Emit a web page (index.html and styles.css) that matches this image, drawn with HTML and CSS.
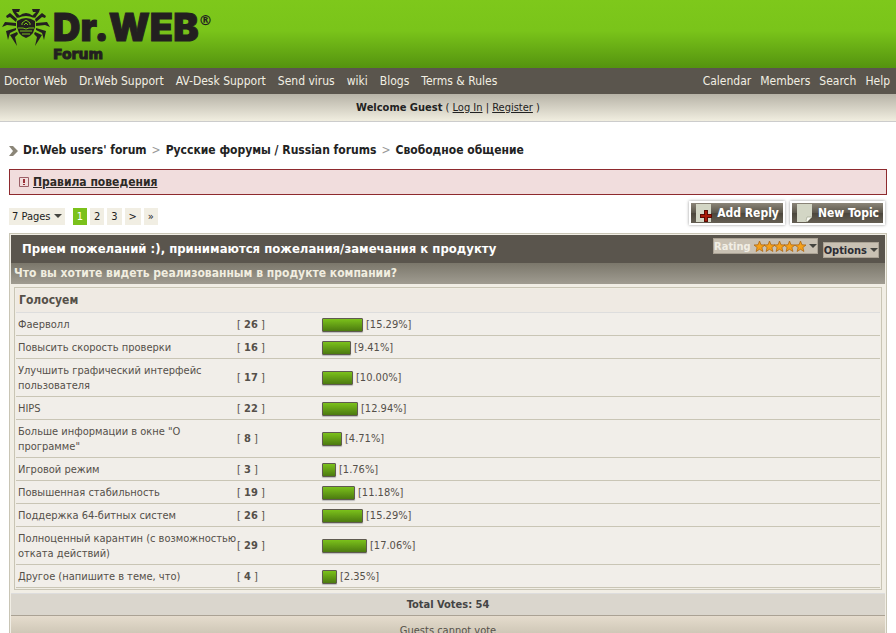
FILE: index.html
```html
<!DOCTYPE html>
<html lang="ru">
<head>
    <meta charset="UTF-8">
    <meta name="viewport" content="width=device-width, initial-scale=1.0">
    <title>Dr.Web forum</title>
    <link rel="stylesheet" href="styles.css">
</head>
<body>

    <header class="header">
        <a class="logo" href="#" aria-label="Dr.Web Forum">
            <svg class="spider" viewBox="0 0 48 38" width="48" height="38" aria-hidden="true">
                <defs>
                    <g id="legs">
                        <path d="M10 1h8l-1 3h-3l4 4-3 2-4-6z"/>
                        <path d="M4 8l4-3 7 6-1 3-6-5-3 1z"/>
                        <path d="M0 19l3-5 11 1v3L5 17z"/>
                        <path d="M14 20v2l-6 3-2 7-2-9z"/>
                        <path d="M15 24l1 2-3 3 2 9-7-11z"/>
                    </g>
                </defs>
                <g fill="#231f20">
                    <use href="#legs"/>
                    <use href="#legs" transform="translate(48) scale(-1 1)"/>
                    <path d="M17 8q7-6 14 0l1 2q-8-4-16 0z"/>
                    <path d="M15 13q9-6 18 0v6l-2 6-3 3-4 2-4-2-3-3-2-6z"/>
                </g>
                <path d="M20 17v-2l4-3 4 3v2M22 17l2-2 2 2M16 20h5l3 1 3-1h5M18 23h12M20 26h8" fill="none" stroke="#78c01a"/>
            </svg>
            <span class="logo-text">
                <span class="logo-name">Dr.WEB<span class="logo-mark">®</span></span>
                <span class="logo-sub">Forum</span>
            </span>
        </a>
    </header>

    <nav class="nav">
        <div class="nav-group nav-main">
            <a href="#">Doctor Web</a>
            <a href="#">Dr.Web Support</a>
            <a href="#">AV-Desk Support</a>
            <a href="#">Send virus</a>
            <a href="#">wiki</a>
            <a href="#">Blogs</a>
            <a href="#">Terms &amp; Rules</a>
        </div>
        <div class="nav-group">
            <a href="#">Calendar</a>
            <a href="#">Members</a>
            <a href="#">Search</a>
            <a href="#">Help</a>
        </div>
    </nav>

    <div class="userbar"><strong>Welcome Guest</strong> ( <a href="#">Log In</a> | <a href="#">Register</a> )</div>

    <main class="content">
        <div class="breadcrumbs">
            <svg viewBox="0 0 9 10" width="9" height="10" aria-hidden="true"><path d="M0 0h4l5 5-5 5H0l4-5z" fill="#8b8678"/></svg>
            <a href="#">Dr.Web users' forum</a>
            <span>&gt;</span>
            <a href="#">Русские форумы / Russian forums</a>
            <span>&gt;</span>
            <a href="#">Свободное общение</a>
        </div>

        <div class="rules">
            <svg viewBox="0 0 10 10" width="10" height="10" aria-hidden="true"><path d="M.5.5h9v9h-9z" fill="none" stroke="#9c6068"/><path d="M4 2h2v4H4zM4 7h2v1H4z" fill="#9c3038"/></svg>
            <a href="#">Правила поведения</a>
        </div>

        <div class="toolbar">
            <div class="pages">
                <button type="button" class="page page-jump">7 Pages <span class="arrow"></span></button>
                <a class="page page-current" href="#">1</a>
                <a class="page" href="#">2</a>
                <a class="page" href="#">3</a>
                <a class="page" href="#">&gt;</a>
                <a class="page" href="#">»</a>
            </div>
            <div class="actions">
                <button type="button" class="action">
                    <svg viewBox="0 0 18 20" width="18" height="20" aria-hidden="true"><path d="M1 1h15v18H1z" fill="#d3d6c5"/><path d="M9 7h4v4h4v4h-4v4H9v-4H5v-4h4z" fill="#5a0d05"/><path d="M10 8h2v4h4v2h-4v4h-2v-4H6v-2h4z" fill="#a81b08"/></svg>
                    Add Reply
                </button>
                <button type="button" class="action">
                    <svg viewBox="0 0 18 20" width="18" height="20" aria-hidden="true"><path d="M1 1h15v13l-5 5H1z" fill="#d3d6c5"/><path d="M16 14l-5 5-1-1 1-4z" fill="#f7f8f0" stroke="#999c88" stroke-width=".6"/></svg>
                    New Topic
                </button>
            </div>
        </div>

        <section class="topic">
            <div class="topic-title">
                <h1>Прием пожеланий :), принимаются пожелания/замечания к продукту</h1>
                <div class="topic-tools">
                    <button type="button" class="tool tool-rating">Rating
                        <svg viewBox="0 0 52 11" width="52" height="11" aria-hidden="true">
                            <defs><path id="star" d="M5.500 0l1.500 3.800 4 .2-3.100 2.500 1 4-3.400-2.200-3.400 2.200 1-4L0 4l4-.2z" fill="#f5a11a" stroke="#a85f0c" stroke-width=".7"/></defs>
                            <use href="#star"/><use href="#star" x="10"/><use href="#star" x="20"/><use href="#star" x="30"/><use href="#star" x="41"/>
                        </svg>
                        <span class="arrow"></span>
                    </button>
                    <button type="button" class="tool">Options <span class="arrow"></span></button>
                </div>
            </div>
            <h2 class="question">Что вы хотите видеть реализованным в продукте компании?</h2>

            <div class="poll">
                <table class="poll-table">
                    <colgroup>
                        <col class="col-choice">
                        <col class="col-votes">
                        <col>
                    </colgroup>
                    <thead>
                        <tr><th colspan="3">Голосуем</th></tr>
                    </thead>
                    <tbody>
                        <tr><td>Фаерволл</td><td class="votes">[ <b>26</b> ]</td><td><span class="bar" style="width: 41px"></span>[15.29%]</td></tr>
                        <tr><td>Повысить скорость проверки</td><td class="votes">[ <b>16</b> ]</td><td><span class="bar" style="width: 29px"></span>[9.41%]</td></tr>
                        <tr><td>Улучшить графический интерфейс пользователя</td><td class="votes">[ <b>17</b> ]</td><td><span class="bar" style="width: 31px"></span>[10.00%]</td></tr>
                        <tr><td>HIPS</td><td class="votes">[ <b>22</b> ]</td><td><span class="bar" style="width: 36px"></span>[12.94%]</td></tr>
                        <tr><td>Больше информации в окне "О программе"</td><td class="votes">[ <b>8</b> ]</td><td><span class="bar" style="width: 20px"></span>[4.71%]</td></tr>
                        <tr><td>Игровой режим</td><td class="votes">[ <b>3</b> ]</td><td><span class="bar" style="width: 14px"></span>[1.76%]</td></tr>
                        <tr><td>Повышенная стабильность</td><td class="votes">[ <b>19</b> ]</td><td><span class="bar" style="width: 33px"></span>[11.18%]</td></tr>
                        <tr><td>Поддержка 64-битных систем</td><td class="votes">[ <b>26</b> ]</td><td><span class="bar" style="width: 41px"></span>[15.29%]</td></tr>
                        <tr><td>Полноценный карантин (с возможностью отката действий)</td><td class="votes">[ <b>29</b> ]</td><td><span class="bar" style="width: 45px"></span>[17.06%]</td></tr>
                        <tr><td>Другое (напишите в теме, что)</td><td class="votes">[ <b>4</b> ]</td><td><span class="bar" style="width: 15px"></span>[2.35%]</td></tr>
                    </tbody>
                </table>
            </div>

            <div class="total">Total Votes: 54</div>
            <div class="guests">Guests cannot vote</div>
        </section>
    </main>

</body>
</html>
```

FILE: styles.css
```css
* {
    box-sizing: border-box;
}

body {
    margin: 0;
    background-color: #fff;
    color: #222;
    font-family: Tahoma, "DejaVu Sans Condensed", "Noto Sans", sans-serif;
    font-size: 11px;
}

a {
    color: inherit;
}

button {
    font-family: inherit;
    cursor: pointer;
}

.header {
    height: 68px;
    padding: 8px 2px;
    background: linear-gradient(#7ec81b 0%, #7ac41a 45%, #54930f 100%);
}

.logo {
    display: flex;
    gap: 3px;
    color: #231f20;
    text-decoration: none;
}

.logo-text {
    display: flex;
    flex-direction: column;
    font-family: "DejaVu Sans", sans-serif;
    font-weight: bold;
}

.logo-name {
    display: flex;
    font-family: Inter, sans-serif;
    font-weight: 900;
    font-size: 38px;
    line-height: 38px;
    -webkit-text-stroke: 1px #231f20;
}

.logo-mark {
    font-family: "DejaVu Sans", sans-serif;
    font-weight: bold;
    font-size: 14px;
    line-height: 24px;
    -webkit-text-stroke: 0;
}

.logo-sub {
    font-size: 14px;
    line-height: 16px;
    -webkit-text-stroke: 1px #231f20;
}

.nav {
    display: flex;
    justify-content: space-between;
    padding: 0 6px 0 4px;
    background-color: #5a554d;
    color: #f2efe3;
    font-size: 12px;
    line-height: 26px;
}

.nav-group {
    display: flex;
    gap: 9px;
}

.nav-main {
    gap: 12px;
}

.nav a {
    text-decoration: none;
}

.userbar {
    padding: 0 8px;
    border-bottom: 1px solid #ccc;
    background: linear-gradient(#b7b3a7, #f1eee0);
    line-height: 27px;
    text-align: center;
}

.content {
    padding: 0 9px;
}

.breadcrumbs {
    display: flex;
    align-items: center;
    gap: 5px;
    padding: 20px 0 10px;
    font-size: 12px;
    font-weight: bold;
    line-height: 17px;
}

.breadcrumbs a {
    text-decoration: none;
}

.breadcrumbs span {
    color: #999;
    font-weight: normal;
}

.rules {
    display: flex;
    align-items: center;
    gap: 4px;
    padding: 0 9px;
    border: 1px solid #8e2a2e;
    background-color: #f1dddd;
    color: #2d2a26;
    font-size: 12px;
    font-weight: bold;
    line-height: 24px;
}

.toolbar {
    display: flex;
    justify-content: space-between;
    align-items: flex-end;
    padding: 6px 2px 8px 0;
}

.pages {
    display: flex;
    gap: 3px;
}

.page {
    padding: 0 4px;
    border: 0;
    background-color: #f1eee3;
    color: #222;
    font-size: 11px;
    line-height: 17px;
    text-decoration: none;
}

.page-jump {
    margin-right: 5px;
    padding: 0 3px;
}

.page-current {
    background-color: #7bc11b;
    color: #fff;
}

.arrow {
    display: inline-block;
    border: 4px solid transparent;
    border-top-color: #44443f;
    border-bottom: 0;
    vertical-align: 2px;
}

.actions {
    display: flex;
    gap: 5px;
}

.action {
    display: flex;
    align-items: center;
    gap: 4px;
    height: 24px;
    padding: 0 4px;
    border: 2px solid #fff;
    background: linear-gradient(#8b8578, #5a554a 50%, #4b463c 51%, #655f53);
    box-shadow: 0 0 3px #999;
    color: #fff;
    font-size: 12px;
    font-weight: bold;
}

.topic {
    border: 1px solid #c9c5b5;
    padding: 1px;
    background-color: #f1eee5;
    color: #555049;
}

.topic-title {
    display: flex;
    justify-content: space-between;
    padding: 0 6px 0 11px;
    background-color: #5a554d;
    color: #fff;
}

.topic-title h1 {
    margin: 0;
    font-size: 13px;
    line-height: 28px;
}

.topic-tools {
    display: flex;
    align-items: flex-start;
    gap: 5px;
    padding-top: 3px;
}

.tool {
    display: flex;
    align-items: center;
    gap: 3px;
    height: 16px;
    margin-top: 4px;
    padding: 0;
    border: 1px solid #aaa294;
    background-color: #c9c1b3;
    color: #2c2c33;
    font-size: 11px;
    font-weight: bold;
}

.tool-rating {
    margin-top: 0;
    color: #f1eee5;
}

.question {
    margin: 0;
    padding: 0 3px;
    background: linear-gradient(#7b776b, #a09c91);
    color: #f1eee0;
    font-size: 12px;
    line-height: 21px;
}

.poll {
    margin: 3px;
    padding: 1px;
    border: 1px solid #c9c5b5;
}

.poll-table {
    width: 100%;
    border-collapse: collapse;
    table-layout: fixed;
    line-height: 15px;
}

.col-choice {
    width: 221px;
}

.col-votes {
    width: 83px;
}

.poll-table th {
    height: 23px;
    padding: 0 3px;
    border-bottom: 1px solid #ddd;
    background-color: #efeae3;
    font-size: 12px;
    text-align: left;
}

.poll-table td {
    padding: 4px 0 3px 2px;
    border-bottom: 1px solid #c9c5b5;
    background-color: #f1eee9;
}

.poll-table .votes {
    padding-left: 0;
}

.bar {
    display: inline-block;
    height: 14px;
    margin-right: 3px;
    border: 1px solid #5f5a50;
    border-radius: 1px;
    background: linear-gradient(#7bc11b, #4c7a10);
    box-shadow: 0 1px 1px #bbb;
    vertical-align: middle;
}

.total {
    border-top: 1px solid #ddd;
    border-bottom: 1px solid #aaa294;
    background-color: #dad6cd;
    color: #444;
    font-weight: bold;
    line-height: 21px;
    text-align: center;
}

.guests {
    background: linear-gradient(#e5dccd, #c0b9a8);
    line-height: 29px;
    text-align: center;
}
```
